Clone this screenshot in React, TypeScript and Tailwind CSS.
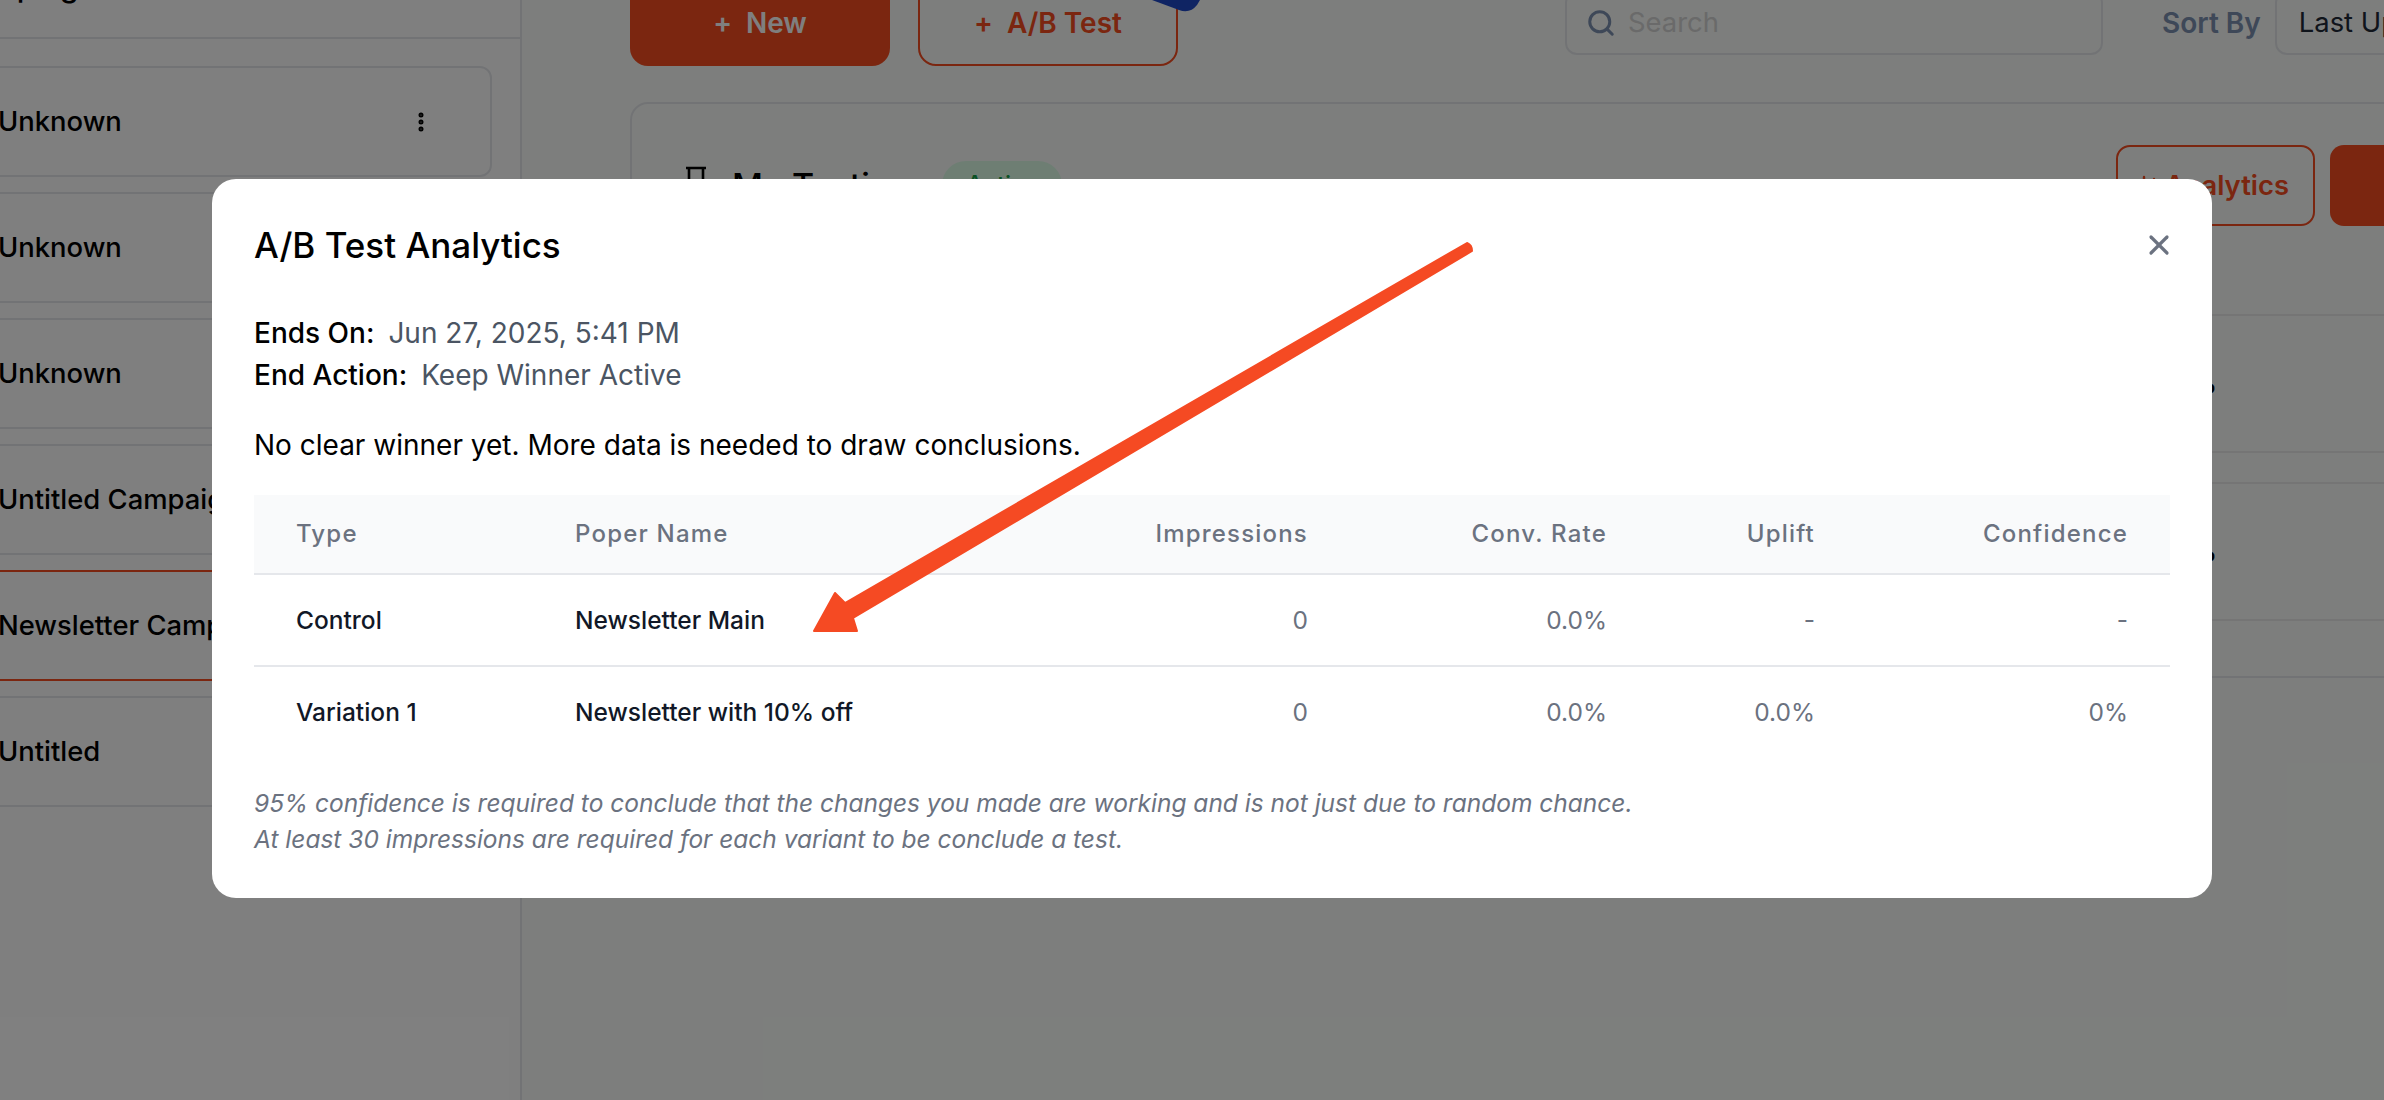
import React from "react";
import { ChartColumn, EllipsisVertical, Search, X } from "lucide-react";

const campaigns = ["Unknown", "Unknown", "Unknown", "Untitled Campaign", "Newsletter Campaign", "Untitled"];

interface ResultRow {
  type: string;
  name: string;
  impressions: string;
  rate: string;
  uplift: string;
  confidence: string;
}

const results: ResultRow[] = [
  { type: "Control", name: "Newsletter Main", impressions: "0", rate: "0.0%", uplift: "-", confidence: "-" },
  { type: "Variation 1", name: "Newsletter with 10% off", impressions: "0", rate: "0.0%", uplift: "0.0%", confidence: "0%" },
];

const Sidebar = () => (
  <aside className="w-[522px] shrink-0 border-r-2 border-[#e5e7eb] h-full overflow-hidden">
    <div className="h-[39px] border-b-2 border-[#e5e7eb] overflow-hidden relative">
      <div className="-mt-[32px] -ml-[49px] text-[30px] leading-[36px] font-medium text-black whitespace-nowrap">Campaigns</div>
    </div>
    <div className="mt-[27px] -ml-[20px] w-[512px] flex flex-col gap-[15px]">
      {campaigns.map((name, i) => (
        <div
          key={i}
          className={`h-[111px] rounded-[12px] border-2 pl-[16px] pr-[57px] flex items-center justify-between ${
            i === 4 ? "border-[#f64c20]" : "border-[#e5e7eb]"
          }`}
        >
          <span className="text-[27.4px] font-medium text-black whitespace-nowrap">{name}</span>
          <EllipsisVertical size={24} strokeWidth={3} className="text-black shrink-0" />
        </div>
      ))}
    </div>
  </aside>
);

const Toolbar = () => (
  <div className="-mt-[21px] h-[87px] flex items-center">
    <button className="shrink-0 w-[260px] h-full rounded-[18px] bg-[#f64c20] text-white text-[28px] font-semibold flex items-center justify-center gap-[14px]">
      <span>+</span>
      <span>New</span>
    </button>
    <button className="shrink-0 ml-[28px] w-[260px] h-full rounded-[18px] border-2 border-[#f64c20] text-[#f64c20] text-[28px] font-semibold flex items-center justify-center gap-[14px]">
      <span>+</span>
      <span>A/B Test</span>
    </button>
    <div className="shrink-0 ml-[387px] w-[538px] h-[64px] rounded-[12px] border-2 border-[#e5e7eb] flex items-center pl-[19px]">
      <Search size={30} strokeWidth={2.4} className="text-[#7d90b0]" />
      <span className="ml-[12px] text-[27.4px] text-[#d4d4d4]">Search</span>
    </div>
    <span className="shrink-0 ml-[59px] text-[28px] font-semibold text-[#7d90b0] whitespace-nowrap">Sort By</span>
    <div className="shrink-0 ml-[14px] w-[300px] h-[64px] rounded-[12px] border-2 border-[#e5e7eb] flex items-center pl-[22px] text-[27.4px] text-[#1f2937] whitespace-nowrap">
      Last Updated
    </div>
  </div>
);

const TestCard = () => (
  <div className="mt-[36px] w-[1900px] h-[576px] rounded-tl-[18px] rounded-bl-[18px] border-2 border-[#e5e7eb]">
    <div className="h-[210px] flex items-start pr-[18px]">
      <svg width="24" height="40" viewBox="0 0 24 40" fill="none" className="ml-[52px] mt-[62px] text-black shrink-0">
        <path d="M2 2h20M5 2v36M19 2v36" stroke="currentColor" strokeWidth="2.6" />
      </svg>
      <span className="shrink-0 ml-[24px] mt-[60px] text-[34px] leading-[44px] font-medium text-black whitespace-nowrap">My Testing</span>
      <span className="shrink-0 ml-[31px] mt-[57px] w-[120px] h-[48px] rounded-full bg-[#dcfce7] text-[#16a34a] text-[24px] font-medium flex items-center justify-center">
        Active
      </span>
      <button className="shrink-0 ml-auto mt-[41px] w-[199px] h-[81px] rounded-[14px] border-2 border-[#f64c20] text-[#f64c20] text-[27.4px] font-semibold flex items-center justify-end pr-[24px] whitespace-nowrap">
        <ChartColumn size={24} strokeWidth={2.4} className="shrink-0" />
        <span>Analytics</span>
      </button>
      <button className="shrink-0 ml-[15px] mt-[41px] w-[180px] h-[81px] rounded-[14px] bg-[#f64c20]" />
    </div>
    {[0, 1].map((i) => (
      <div key={i} className="mb-[29px] h-[139px] border-y-2 border-[#ebebeb] flex items-center">
        <div className="w-[1585px] text-right text-[27.4px] font-semibold text-black">0%</div>
      </div>
    ))}
  </div>
);

const ResultsTable = () => (
  <table className="mt-[29px] w-full table-fixed border-collapse text-[24.5px]">
    <thead>
      <tr className="h-[79px] bg-[#f9fafb] border-b-2 border-[#e5e7eb] text-[24px] text-[#6b7280] tracking-[0.05em]">
        <th className="w-[278px] pl-[42px] text-left font-medium">Type</th>
        <th className="w-[468px] pl-[43px] text-left font-medium">Poper Name</th>
        <th className="w-[350px] pr-[42px] text-right font-medium">Impressions</th>
        <th className="w-[299px] pr-[42px] text-right font-medium">Conv. Rate</th>
        <th className="w-[208px] pr-[42px] text-right font-medium">Uplift</th>
        <th className="w-[313px] pr-[42px] text-right font-medium">Confidence</th>
      </tr>
    </thead>
    <tbody>
      {results.map((row, i) => (
        <tr key={row.type} className={`h-[92px] ${i === 0 ? "border-b-2 border-[#e5e7eb]" : ""}`}>
          <td className="pl-[42px] font-medium text-[#111827]">{row.type}</td>
          <td className="pl-[43px] font-medium text-[#111827]">{row.name}</td>
          <td className="pr-[42px] text-right text-[#6b7280]">{row.impressions}</td>
          <td className="pr-[42px] text-right text-[#6b7280]">{row.rate}</td>
          <td className="pr-[42px] text-right text-[#6b7280]">{row.uplift}</td>
          <td className="pr-[42px] text-right text-[#6b7280]">{row.confidence}</td>
        </tr>
      ))}
    </tbody>
  </table>
);

const AnalyticsModal = () => (
  <div className="absolute left-[212px] top-[179px] w-[2000px] h-[719px] rounded-[24px] bg-white px-[42px] pt-[43px]">
    <div className="flex items-center justify-between h-[46px]">
      <h2 className="text-[35px] font-medium text-black">A/B Test Analytics</h2>
      <X size={32} strokeWidth={2.4} className="text-[#6b7280] -mr-[5px]" />
    </div>
    <div className="mt-[44px] text-[28px] leading-[42px]">
      <p>
        <span className="font-medium text-black">Ends On:</span>
        <span className="ml-[14px] text-[#4b5563]">Jun 27, 2025, 5:41 PM</span>
      </p>
      <p>
        <span className="font-medium text-black">End Action:</span>
        <span className="ml-[14px] text-[#4b5563]">Keep Winner Active</span>
      </p>
    </div>
    <p className="mt-[28px] text-[28px] leading-[42px] text-black">No clear winner yet. More data is needed to draw conclusions.</p>
    <ResultsTable />
    <div className="mt-[27px] text-[24.5px] leading-[36px] italic text-[#6b7280]">
      <p>95% confidence is required to conclude that the changes you made are working and is not just due to random chance.</p>
      <p>At least 30 impressions are required for each variant to be conclude a test.</p>
    </div>
  </div>
);

export default function App() {
  return (
    <div className="relative w-[2384px] h-[1100px] overflow-hidden bg-white font-['Inter',sans-serif] flex">
      <Sidebar />
      <main className="flex-1 min-w-0 pl-[108px] bg-[#fafdfa]">
        <Toolbar />
        <TestCard />
      </main>

      <div className="absolute inset-0 bg-black/50" />

      {/* blue callout corner poking in from above the page */}
      <svg width="60" height="14" viewBox="0 0 60 14" className="absolute left-[1146px] top-0">
        <path d="M6 0L33 10Q44 14 51 5L54 0Z" fill="#0f2463" />
      </svg>

      <AnalyticsModal />

      {/* annotation arrow drawn over the modal */}
      <svg width="2384" height="1100" viewBox="0 0 2384 1100" className="absolute inset-0 pointer-events-none">
        <path
          d="M835 593L845 603L1467 243Q1472 245 1472 251L853 618L857 631H814Z"
          fill="#f54a23"
          stroke="#f54a23"
          strokeWidth="2"
          strokeLinejoin="round"
        />
      </svg>
    </div>
  );
}
